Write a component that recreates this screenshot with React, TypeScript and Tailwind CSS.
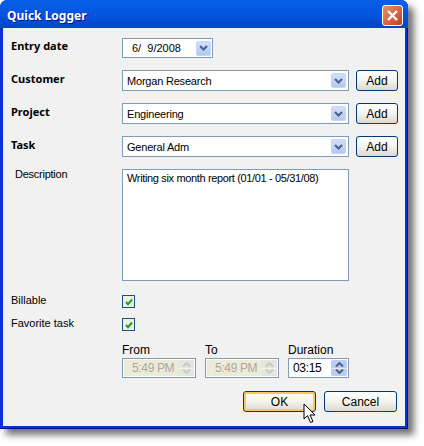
import { ReactNode } from "react";

const Chevron = () => (
  <svg width="9" height="6" viewBox="0 0 9 6" fill="none">
    <path d="M1 1l3.5 3.5L8 1" stroke="#4d6185" strokeWidth="2" />
  </svg>
);

const DropButton = () => (
  <div className="w-[15px] h-[15px] rounded-[2px] bg-gradient-to-b from-[#d3e0fb] to-[#b3c8f3] border border-[#c5d5f6] flex items-center justify-center">
    <Chevron />
  </div>
);

const Combo = ({ text, width }: { text: string; width: string }) => (
  <div className={`${width} h-[21px] bg-white border border-[#7f9db9] flex items-center justify-between pl-1 pr-[2px]`}>
    <span className="text-[11px] tracking-[-0.2px] pt-[1px] text-black">{text}</span>
    <DropButton />
  </div>
);

const XpButton = ({ children, className }: { children: ReactNode; className: string }) => (
  <div className={`${className} h-[21px] rounded-[3px] border border-[#003c74] bg-gradient-to-b from-[#ffffff] via-[#f4f4ee] to-[#dcd8cc] flex items-center justify-center text-[12px] text-black`}>
    {children}
  </div>
);

const Check = () => (
  <div className="w-[13px] h-[13px] border border-[#1c5180] bg-[#ecf0e8] flex items-center justify-center">
    <svg width="8" height="8" viewBox="0 0 8 8" fill="none">
      <path d="M1 4l2 2.200L7 1.500" stroke="#21a121" strokeWidth="2" />
    </svg>
  </div>
);

const SpinArrow = ({ up, color }: { up?: boolean; color: string }) => (
  <svg width="9" height="5" viewBox="0 0 9 5" fill="none">
    <path d={up ? "M1 4.500l3.500-3.500L8 4.500" : "M1 .5l3.500 3.500L8 .5"} stroke={color} strokeWidth="2" />
  </svg>
);

const Spinner = ({ value, width, disabled }: { value: string; width: string; disabled?: boolean }) => {
  const arrow = disabled ? "#c9c9c2" : "#4d6185";
  return (
    <div className={`${width} h-[20px] border border-[#7f9db9] flex items-center justify-between pr-[1px] ${disabled ? "bg-[#ecead9] text-[#aca899] pl-[9px] shadow-[inset_0_0_0_1px_#fff]" : "bg-white text-black pl-[4px]"}`}>
      <span className="text-[12px] tracking-[-0.35px]">{value}</span>
      <div className={`w-[16px] h-[16px] flex flex-col rounded-[2px] items-center justify-between py-[2px] border-y-0 ${disabled ? "bg-[#e6e6e0]" : "bg-[#bccdf5]"}`}>
        <SpinArrow up color={arrow} />
        <div className={`w-full h-[1px] ${disabled ? "bg-[#f5f5ee]" : "bg-[#ece9d8]"}`} />
        <SpinArrow color={arrow} />
      </div>
    </div>
  );
};

const Labeled = ({ label, children }: { label: string; children: ReactNode }) => (
  <div className="flex flex-col gap-[1px]">
    <span className="text-[12px] leading-[14px] text-black">{label}</span>
    {children}
  </div>
);

const ComboRow = ({ label, text }: { label: string; text: string }) => (
  <div className="flex items-start">
    <span className="w-[119px] pl-[8px] pt-[1px] text-[11px] leading-[16px] font-bold text-black font-['Noto_Sans',sans-serif]">{label}</span>
    <Combo text={text} width="w-[227px]" />
    <XpButton className="w-[42px] ml-[7px]">Add</XpButton>
  </div>
);

export default function App() {
  return (
    <div className="w-[424px] h-[446px] bg-white overflow-hidden font-['Liberation_Sans',sans-serif]">
      <div className="relative w-[408px] h-[429px] rounded-t-[7px] bg-[#0831d9] flex flex-col shadow-[inset_-1px_-1px_0_#00138c,6px_6px_7px_rgba(0,0,0,0.55)]">
        <div className="h-[28px] rounded-t-[7px] bg-gradient-to-b from-[#0a5fe8] via-[#0355e0] to-[#0345c8] flex items-center justify-between pl-[7px] pr-[4px] shrink-0">
          <span className="text-[12px] pt-[3px] font-bold text-white font-['Noto_Sans',sans-serif] [text-shadow:1px_1px_0_#0f1089]">Quick Logger</span>
          <div className="w-[21px] h-[21px] mt-[2px] rounded-[3px] border border-white bg-gradient-to-br from-[#e8906f] to-[#c43c16] flex items-center justify-center mr-[1px]">
            <svg width="11" height="11" viewBox="0 0 11 11">
              <path d="M1 1l9 9M10 1l-9 9" stroke="#fff" strokeWidth="2.4" />
            </svg>
          </div>
        </div>

        <div className="mx-[3px] mb-[3px] flex-1 bg-[#f1f1f1] flex flex-col pt-[10px]">
          <div className="flex items-start">
            <span className="w-[119px] pl-[8px] text-[11px] leading-[16px] font-bold text-black font-['Noto_Sans',sans-serif]">Entry date</span>
            <div className="w-[91px] h-[20px] bg-white border border-[#7f9db9] flex items-center justify-between pl-[9px] pr-[1px]">
              <span className="text-[11px] pt-[1px]">6/&nbsp; 9/2008</span>
              <DropButton />
            </div>
          </div>

          <div className="flex flex-col gap-[12px] mt-[12px]">
            <ComboRow label="Customer" text="Morgan Research" />
            <ComboRow label="Project" text="Engineering" />
            <ComboRow label="Task" text="General Adm" />
          </div>

          <div className="flex items-start mt-[12px]">
            <span className="w-[119px] pl-[12px] text-[11px] tracking-[-0.25px] leading-[10px] text-black">Description</span>
            <div className="w-[227px] h-[112px] bg-white border border-[#7f9db9] px-[4px] py-[1px] text-[11px] tracking-[-0.35px] leading-[14px] text-black whitespace-nowrap">
              Writing six month report (01/01 - 05/31/08)
            </div>
          </div>

          <div className="flex items-start mt-[14px]">
            <span className="w-[119px] pl-[8px] pt-[0px] text-[11px] leading-[10px] text-black">Billable</span>
            <Check />
          </div>
          <div className="flex items-start mt-[10px]">
            <span className="w-[119px] pl-[8px] text-[11px] leading-[10px] text-black">Favorite task</span>
            <Check />
          </div>

          <div className="flex items-start gap-[9px] ml-[119px] mt-[12px]">
            <Labeled label="From"><Spinner value="5:49 PM" width="w-[74px]" disabled /></Labeled>
            <Labeled label="To"><Spinner value="5:49 PM" width="w-[74px]" disabled /></Labeled>
            <Labeled label="Duration"><Spinner value="03:15" width="w-[61px]" /></Labeled>
          </div>

          <div className="flex justify-end gap-[8px] pr-[8px] mt-[13px]">
            <XpButton className="w-[73px] shadow-[inset_0_0_0_2px_#f9c765]">OK</XpButton>
            <XpButton className="w-[73px]">Cancel</XpButton>
          </div>
        </div>

        <svg className="absolute left-[303px] top-[403px]" width="13" height="22" viewBox="0 0 13 22">
          <path d="M1 1v15l3.500-3.500 3 7 2.500-1-3-6.500h5z" fill="#fff" stroke="#000" strokeWidth="1" />
        </svg>
      </div>
    </div>
  );
}
